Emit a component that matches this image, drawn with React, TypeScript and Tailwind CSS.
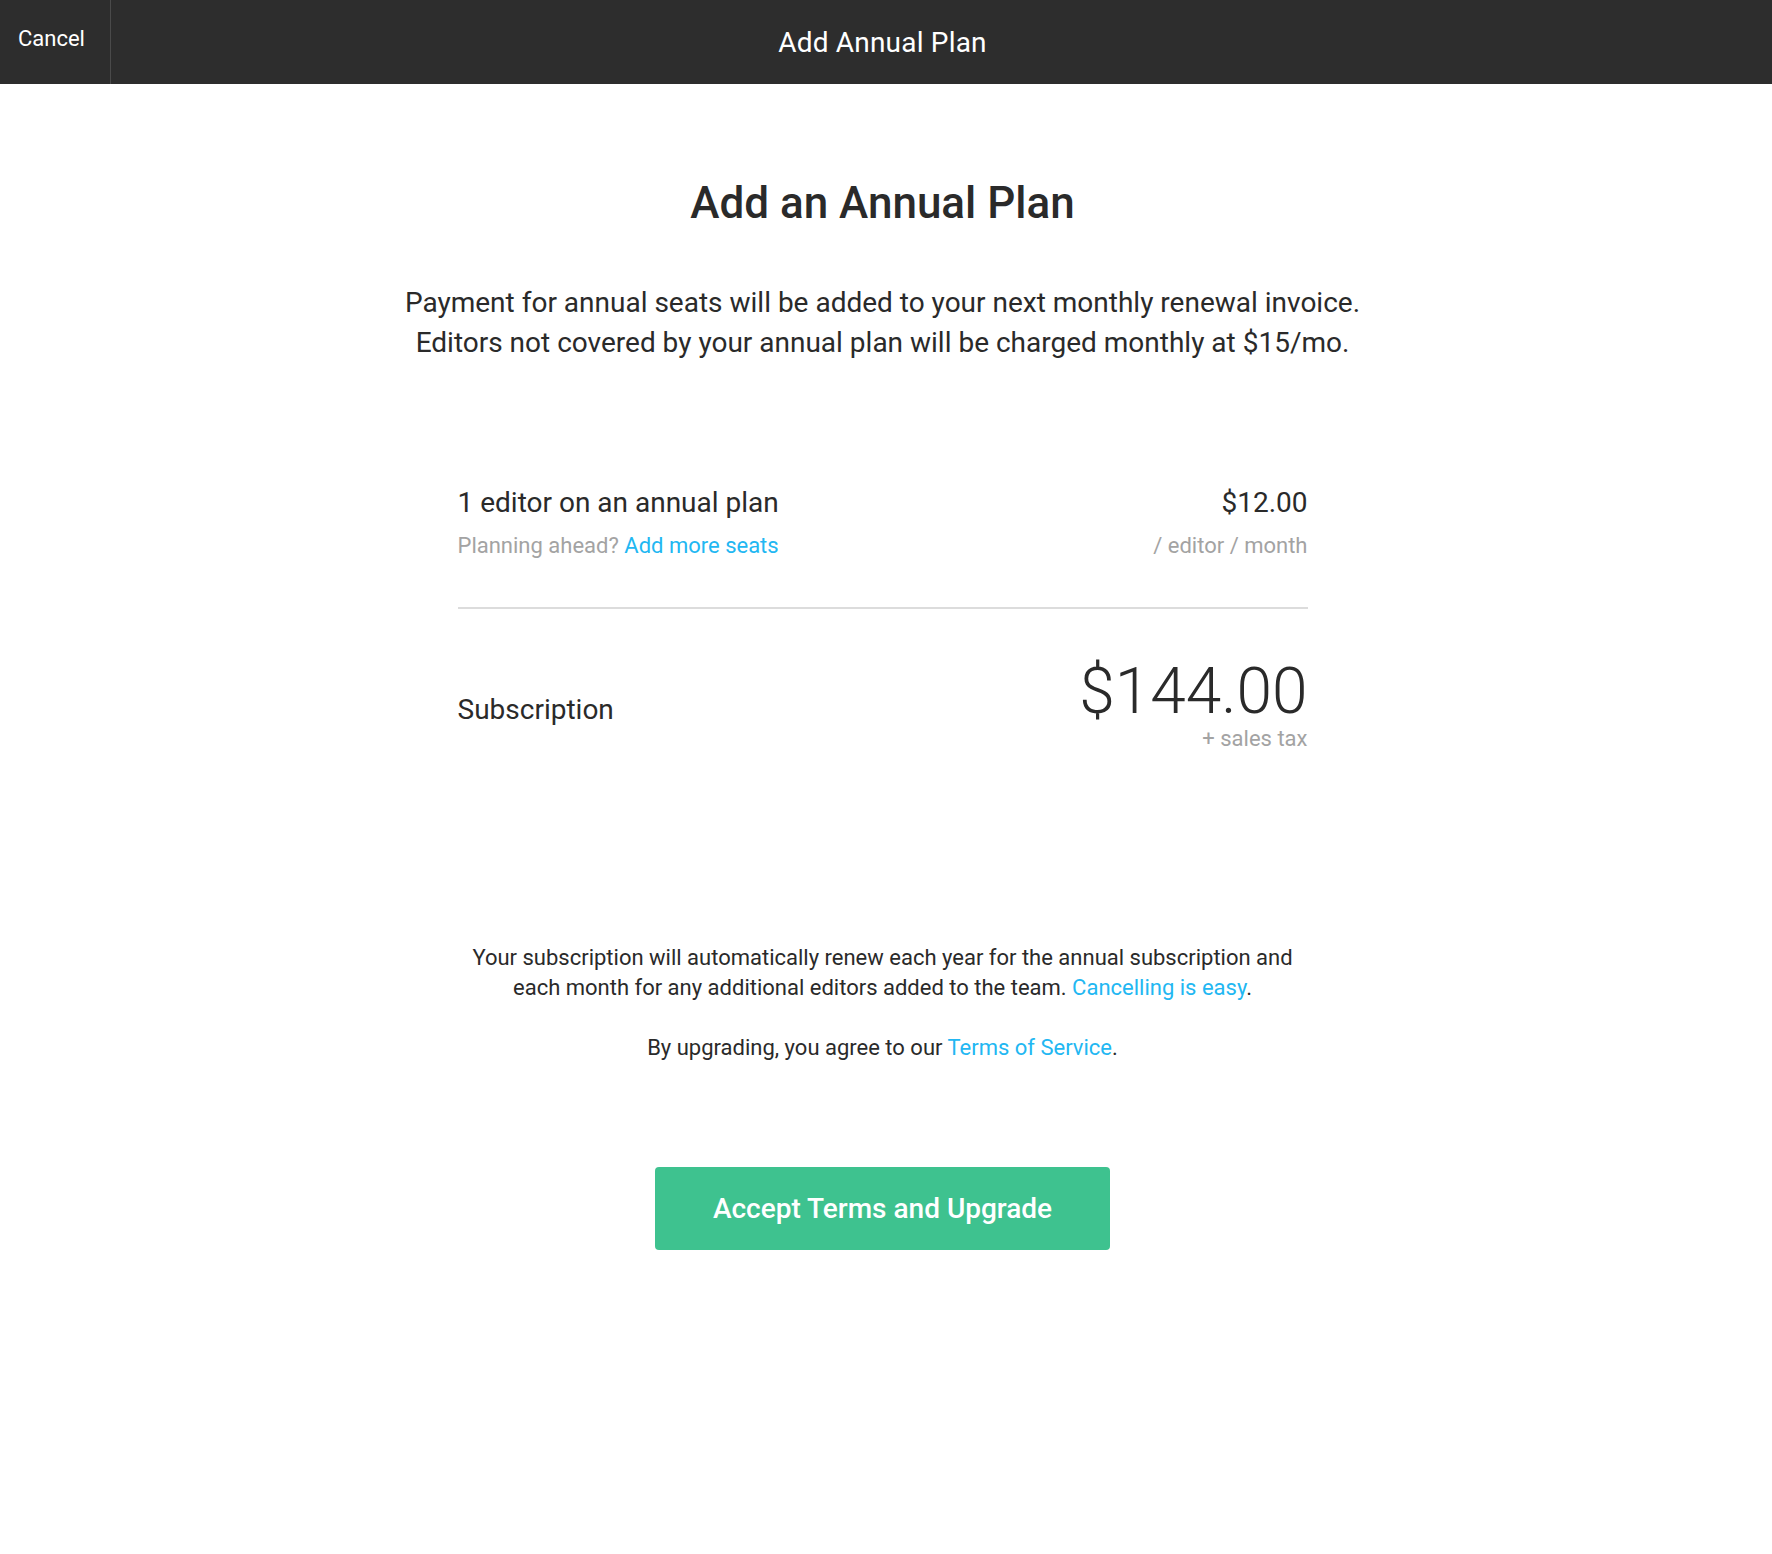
import React from "react";

const App: React.FC = () => {
  return (
    <div className="min-h-screen w-full bg-white pr-[7px] text-[#2a2a2a]" style={{ fontFamily: "Roboto, 'Liberation Sans', sans-serif" }}>
      {/* Top bar */}
      <div className="relative -mr-[7px] flex h-[84px] items-center justify-center bg-[#2d2d2d] pr-[7px]">
        <button className="absolute left-0 top-0 flex h-full w-[111px] items-center border-r border-[#4a4a4a] pl-[18px] pb-[8px] text-[22px] text-white">
          Cancel
        </button>
        <h1 className="mt-[2px] text-[28px] font-normal tracking-[0.2px] text-white">Add Annual Plan</h1>
      </div>

      <div className="mx-auto flex w-[1000px] flex-col items-center">
        <h2 className="mt-[97px] text-[44px] leading-none font-medium text-[#2a2a2a]">Add an Annual Plan</h2>

        <p className="mt-[58px] text-center text-[28px] leading-[40px] text-[#2a2a2a]">
          Payment for annual seats will be added to your next monthly renewal invoice.
          <br />
          Editors not covered by your annual plan will be charged monthly at $15/mo.
        </p>

        {/* Line item */}
        <div className="mt-[123px] w-[850px]">
          <div className="flex items-start justify-between border-b-2 border-[#dcdcdc] pb-[47px]">
            <div>
              <div className="text-[28px] leading-[34px]">1 editor on an annual plan</div>
              <div className="mt-[12px] text-[22px] leading-[28px] text-[#a3a3a3]">
                Planning ahead? <a className="text-[#22b7f2]">Add more seats</a>
              </div>
            </div>
            <div className="text-right">
              <div className="text-[28px] leading-[34px]">$12.00</div>
              <div className="mt-[12px] text-[22px] leading-[28px] text-[#a3a3a3]">/ editor / month</div>
            </div>
          </div>

          <div className="flex items-center justify-between pt-[50px]">
            <div className="mt-[8px] text-[28px]">Subscription</div>
            <div className="text-right">
              <div className="text-[64px] leading-[66px] font-light text-[#2a2a2a]">$144.00</div>
              <div className="text-[22px] leading-[28px] text-[#a3a3a3]">+ sales tax</div>
            </div>
          </div>
        </div>

        {/* Legal */}
        <p className="mt-[190px] w-[840px] text-center text-[22px] leading-[30px] text-[#2a2a2a]">
          Your subscription will automatically renew each year for the annual subscription and each month for any additional editors added to the team.{" "}
          <a className="text-[#22b7f2]">Cancelling is easy</a>.
        </p>
        <p className="mt-[30px] text-center text-[22px] leading-[30px] text-[#2a2a2a]">
          By upgrading, you agree to our <a className="text-[#22b7f2]">Terms of Service</a>.
        </p>

        <button className="mt-[104px] flex h-[83px] w-[455px] items-center justify-center rounded-[4px] bg-[#3ec28f] text-[28px] font-medium text-white">
          Accept Terms and Upgrade
        </button>
      </div>
    </div>
  );
};

export default App;
